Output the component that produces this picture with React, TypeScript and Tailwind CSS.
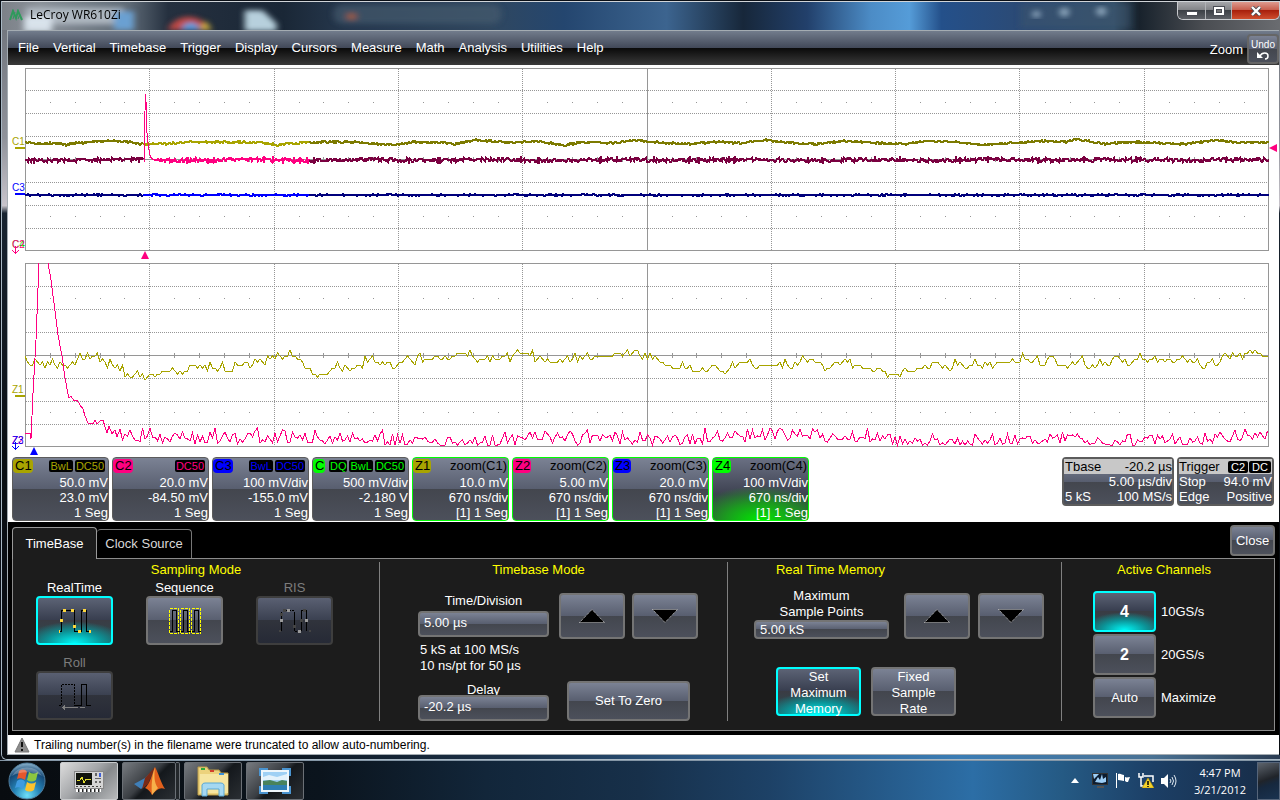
import { useState } from "react";
import type { ReactNode } from "react";

type Point = [number, number];

const MENU = [
  "File",
  "Vertical",
  "Timebase",
  "Trigger",
  "Display",
  "Cursors",
  "Measure",
  "Math",
  "Analysis",
  "Utilities",
  "Help",
];

const PLOT_W = 1244;

// Outlines of the traces, in plot pixels.
const C1_SHAPE: Point[] = [
  [0, 74], [14, 76], [28, 75], [42, 77], [50, 75], [60, 75], [70, 73], [80, 73],
  [105, 74], [112, 76], [140, 76], [160, 74], [215, 74], [240, 75], [252, 77],
  [270, 75], [300, 74], [330, 74], [350, 76], [370, 77], [390, 74], [410, 74],
  [430, 76], [450, 72], [475, 74], [490, 75], [510, 73], [540, 77], [560, 74],
  [590, 75], [610, 72], [640, 75], [665, 76], [690, 74], [715, 75], [740, 72],
  [765, 75], [790, 76], [820, 73], [850, 75], [880, 76], [905, 73], [930, 74],
  [955, 77], [985, 75], [1015, 73], [1040, 74], [1052, 71], [1080, 76], [1110, 74],
  [1135, 75], [1160, 76], [1190, 72], [1215, 75], [1244, 74],
];

const Z1_SHAPE: Point[] = [
  [0, 95], [4, 102], [8, 97], [11, 99], [16, 103], [35, 103], [45, 102], [50, 98],
  [58, 95], [63, 93], [67, 97], [73, 96], [78, 100], [87, 101], [95, 108], [101, 111],
  [106, 115], [111, 111], [116, 113], [121, 115], [125, 112], [132, 109], [140, 110],
  [145, 104], [153, 108], [161, 108], [171, 104], [181, 105], [195, 104], [203, 108],
  [211, 104], [221, 99], [229, 102], [237, 99], [245, 95], [252, 92], [258, 95],
  [263, 90], [268, 91], [273, 95], [278, 102], [285, 108], [293, 113], [300, 108],
  [310, 106], [322, 105], [333, 106], [340, 100], [347, 97], [355, 99], [365, 101],
  [375, 100], [382, 94], [390, 98], [405, 96], [420, 97], [437, 90], [450, 95],
  [465, 97], [485, 95], [495, 90], [520, 98], [535, 99], [555, 94], [575, 93],
  [595, 91], [615, 91], [630, 95], [640, 102], [660, 105], [675, 108], [687, 105],
  [699, 109], [715, 99], [735, 102], [765, 103], [785, 95], [800, 105], [820, 99],
  [835, 103], [845, 106], [860, 110], [872, 112], [880, 109], [888, 107], [897, 105],
  [912, 102], [925, 107], [931, 100], [940, 106], [945, 102], [970, 101], [980, 99],
  [990, 99], [997, 95], [1012, 95], [1018, 103], [1023, 95], [1030, 102], [1045, 104],
  [1055, 99], [1065, 104], [1075, 100], [1085, 104], [1092, 94], [1100, 102],
  [1107, 98], [1120, 95], [1135, 97], [1155, 97], [1171, 96], [1178, 102], [1185, 98],
  [1195, 98], [1203, 92], [1215, 94], [1221, 89], [1231, 89], [1237, 93], [1244, 93],
];

const Z2_RISE = "M0 170H5L6 176L8 130L11 77L14 0";
const Z2_FALL =
  "M23 0L26 17L30 48L33 72L37 93L40 115L43 131L44 135L46 133L49 138L52 137L55 142L58 146L60 153L63 160L68 161L70 157L72 161L76 157H78L80 164L82 170L84 163L87 171L90 167L92 174";

function rng(seed: number) {
  let s = seed;
  return () => {
    s = (s * 1103515245 + 12345) % 2147483648;
    return s / 2147483648;
  };
}

function valueAt(shape: Point[], x: number) {
  for (let i = 1; i < shape.length; i++) {
    const [x0, y0] = shape[i - 1];
    const [x1, y1] = shape[i];
    if (x <= x1) return y0 + ((y1 - y0) * (x - x0)) / (x1 - x0);
  }
  return shape[shape.length - 1][1];
}

function zoomYellow() {
  const rand = rng(17);
  let d = "";
  for (let x = 0; x <= PLOT_W; x += 2.5) {
    const r = rand();
    const jump = r > 0.95 ? -6 : r > 0.72 ? -3 : r < 0.2 ? 3 : 0;
    const y = Math.round((valueAt(Z1_SHAPE, x) + jump) / 3) * 3;
    d += `${d ? "L" : "M"}${x} ${y}`;
  }
  return d;
}

function zoomPink() {
  const rand = rng(91);
  let d = "M92 174";
  for (let x = 95; x <= PLOT_W; x += 2.5) {
    const r = rand();
    const mid = 175 - 2 * Math.sin(x / 38) - 2 * Math.sin(x / 90);
    const spike = r > 0.95 ? -6 : r < 0.05 ? 5 : 0;
    const y = Math.min(182, Math.max(165, mid + (rand() - 0.5) * 13 + spike));
    d += `L${x} ${Math.round(y)}`;
  }
  return d;
}

function noisyLine(from: number, to: number, base: (x: number) => number, amp: number, seed: number) {
  const rand = rng(seed);
  let d = "";
  for (let x = from; x <= to; x++) {
    d += `${d ? "L" : "M"}${x} ${Math.round(base(x) + (rand() - 0.5) * amp)}`;
  }
  return d;
}

const c1Base = (x: number) => valueAt(C1_SHAPE, x);
const c2Base = (x: number) => 92 + 0.5 * Math.sin(x / 20);
const c3Base = () => 127;

const C1_PARTS = [
  { d: noisyLine(0, 118, c1Base, 1.8, 3), color: "#7c7a00" },
  { d: noisyLine(118, 284, c1Base, 1.8, 5), color: "#a8a400" },
  { d: noisyLine(284, PLOT_W, c1Base, 1.8, 7), color: "#7c7a00" },
];
const C2_PARTS = [
  { d: noisyLine(0, 118, c2Base, 4, 13), color: "#7a0040" },
  { d: noisyLine(129, 284, c2Base, 4, 15), color: "#ff0080" },
  { d: noisyLine(284, PLOT_W, c2Base, 4, 19), color: "#7a0040" },
];
const C3_PARTS = [
  { d: noisyLine(0, 118, c3Base, 1.3, 23), color: "#00007c" },
  { d: noisyLine(118, 284, c3Base, 1.3, 25), color: "#0000ff" },
  { d: noisyLine(284, PLOT_W, c3Base, 1.3, 29), color: "#00007c" },
];
const Z1_PATH = zoomYellow();
const Z2_PATH = zoomPink();

const FACE = "bg-[linear-gradient(180deg,#7b8294_0%,#585e6f_50%,#43464e_50%,#4c505b_100%)]";
const FACE_DIM = "bg-[linear-gradient(180deg,#5a6072_0%,#3a4050_50%,#30333c_50%,#262a36_100%)]";
const FACE_ON =
  "bg-[radial-gradient(ellipse_70%_48%_at_50%_100%,#00f6f6_0%,#0c9296_55%,transparent_100%),linear-gradient(180deg,#5c6375_0%,#373d4e_50%,#3a3c44_50%,#2a4c52_100%)]";

function Graticule({ label, mid, children }: { label: string; mid: number; children: ReactNode }) {
  const cols = Array.from({ length: 9 }, (_, i) => Math.round((i + 1) * 124.3) + 0.5);
  const rows = [-3, -2, -1, 1, 2, 3].map((i) => mid + i * 23 + 0.5);
  const minor = Array.from({ length: 50 }, (_, i) => i).filter((i) => i % 5 !== 0);
  return (
    <svg
      role="img"
      aria-label={label}
      viewBox="0 0 1244 184"
      preserveAspectRatio="none"
      shapeRendering="crispEdges"
      fill="none"
      className="block h-[184px] w-full"
    >
      <g stroke="#969696">
        <path d={`M0.5 0.5H1243.5V${mid + 91.5}H0.5z`} />
        {cols.map((x, i) => (
          <path key={x} d={`M${x} 1V183`} strokeDasharray={i === 4 ? undefined : "1 1"} />
        ))}
        {rows.map((y) => (
          <path key={y} d={`M1 ${y}H1243`} strokeDasharray="1 1" />
        ))}
        <path d={`M0 ${mid + 0.5}H1244`} />
        {minor.map((i) => {
          const x = Math.round(i * 24.87);
          return (
            <g key={i}>
              <path d={`M${x + 0.5} ${mid - 2}v5`} />
              <path d={`M${x} ${mid - 56.5}h1M${x} ${mid + 57.5}h1`} />
            </g>
          );
        })}
      </g>
      {children}
    </svg>
  );
}

function TraceMark({ name, color, top }: { name: string; color: string; top: string }) {
  return (
    <div className={`absolute right-0 ${top} ${color} w-[13px] text-[10px] leading-[10px]`}>
      {name}
      <div className="ml-[3px] h-0.5 bg-current" />
    </div>
  );
}

interface OffscreenMarkProps {
  name: string;
  behind: string;
  color: string;
  behindColor: string;
  top: string;
}

// Two traces have left the grid at the same spot, so their names share it.
function OffscreenMark({ name, behind, color, behindColor, top }: OffscreenMarkProps) {
  return (
    <div className={`absolute right-0 ${top} ${color} w-[13px] text-[10px] leading-[10px]`}>
      <span className={`absolute left-0 top-0 ${behindColor}`}>{behind}</span>
      <span className="relative">{name}</span>
      <svg viewBox="0 0 7 9" className="absolute left-0 top-1.5 h-[9px] w-[7px]" shapeRendering="crispEdges" stroke="currentColor" fill="none">
        <path d="M3.5 0V8M0.5 4.5L3.5 7.5L6.5 4.5" />
      </svg>
    </div>
  );
}

interface ChannelProps {
  name: string;
  badge: string;
  short?: string;
  chips?: string[];
  chipColor?: string;
  source?: string;
  lines: string[];
  selected?: boolean;
}

const CHANNELS: ChannelProps[] = [
  { name: "C1", badge: "bg-[#a8a400]", chips: ["BwL", "DC50"], chipColor: "text-[#a8a400]", lines: ["50.0 mV", "23.0 mV", "1 Seg"] },
  { name: "C2", badge: "bg-[#ff0080]", chips: ["DC50"], chipColor: "text-[#ff0080]", lines: ["20.0 mV", "-84.50 mV", "1 Seg"] },
  { name: "C3", badge: "bg-[#0000ff]", chips: ["BwL", "DC50"], chipColor: "text-[#0000ff]", lines: ["100 mV/div", "-155.0 mV", "1 Seg"] },
  { name: "C4", short: "C", badge: "bg-[#00ff00]", chips: ["DQ", "BwL", "DC50"], chipColor: "text-[#00ff00]", lines: ["500 mV/div", "-2.180 V", "1 Seg"] },
  { name: "Z1", badge: "bg-[#a8a400]", source: "zoom(C1)", lines: ["10.0 mV", "670 ns/div", "[1] 1 Seg"] },
  { name: "Z2", badge: "bg-[#ff0080]", source: "zoom(C2)", lines: ["5.00 mV", "670 ns/div", "[1] 1 Seg"] },
  { name: "Z3", badge: "bg-[#0000ff]", source: "zoom(C3)", lines: ["20.0 mV", "670 ns/div", "[1] 1 Seg"] },
  { name: "Z4", badge: "bg-[#00ff00]", source: "zoom(C4)", lines: ["100 mV/div", "670 ns/div", "[1] 1 Seg"], selected: true },
];

function ChannelBox({ name, short, badge, chips, chipColor, source, lines, selected }: ChannelProps) {
  const face = selected
    ? "bg-[radial-gradient(ellipse_75%_55%_at_50%_100%,#00e800_0%,#1c9a20_50%,transparent_100%),linear-gradient(180deg,#6a7083_0%,#3c404f_60%,#34443a_100%)]"
    : FACE;
  return (
    <button
      className={`flex h-16 w-[97px] shrink-0 flex-col rounded-sm border ${source ? "border-[#00ff00]" : "border-[#5c5c5c]"} ${face} text-right leading-[15px] text-white`}
    >
      <span className="flex h-[17px] w-full items-start justify-between text-black">
        <span className={`mt-px h-3.5 shrink-0 rounded-sm pl-0.5 pr-px leading-3.5 ${badge}`}>{short ?? name}</span>
        {source ? (
          <span className="pr-px">{source}</span>
        ) : (
          <span className="mt-0.5 flex shrink-0 gap-0.5 pr-[3px]">
            {chips?.map((chip) => (
              <span key={chip} className={`rounded-xs bg-black px-px text-[11px] leading-3 ${chipColor}`}>
                {chip}
              </span>
            ))}
          </span>
        )}
      </span>
      {lines.map((line) => (
        <span key={line} className="w-full whitespace-nowrap">
          {line}
        </span>
      ))}
    </button>
  );
}

function SquareWave({ dots }: { dots: string }) {
  return (
    <svg viewBox="0 0 34 26" className="h-[26px] w-[34px]" shapeRendering="crispEdges" fill="none">
      <path d="M2 23.5H3.5V2.5H16.5V23.5H23.5V2.5H28.5V23.5H32" stroke="#000" />
      <path
        d="M1 22h1v3h-1zM2 11h3v3H2zM5 1h3v3H5zM13 1h3v3h-3zM15 17h3v3h-3zM20 22h3v3h-3zM25 1h3v3h-3zM31 22h2v3h-2z"
        fill={dots}
      />
    </svg>
  );
}

function SparseWave() {
  return (
    <svg viewBox="0 0 34 26" className="h-[26px] w-[34px]" shapeRendering="crispEdges" fill="none">
      <path d="M3.5 23V4M16.5 4V23M23.5 23V2.5H28.5V23" stroke="#000" />
      <path d="M5 2.5H16M17 23.5H23" stroke="#000" strokeDasharray="2 1" />
      <path d="M1 22h2v2H1zM2 5h3v3H2zM5 1h3v3H5zM15 17h3v3h-3zM22 11h3v3h-3zM25 1h3v3h-3zM31 22h2v2h-2z" fill="#444" />
      <path d="M2 11h3v3H2zM9 1h3v3H9zM20 22h3v3h-3zM27 11h3v3h-3z" fill="#9a9a9a" />
    </svg>
  );
}

function SequenceIcon() {
  return (
    <svg viewBox="0 0 34 28" className="h-7 w-[34px]" shapeRendering="crispEdges" fill="none">
      <path d="M1 24.5H4.5V3.5H8.5V24.5H15.5V3.5H19.5V24.5H26.5V3.5H30.5V24.5H33" stroke="#000" />
      <path d="M1.5 1.5h9v25h-9zM12.5 1.5h9v25h-9zM23.5 1.5h9v25h-9z" stroke="#ffff00" strokeDasharray="3 1" />
    </svg>
  );
}

function RollIcon() {
  return (
    <svg viewBox="0 0 34 28" className="h-7 w-[34px]" shapeRendering="crispEdges" fill="none">
      <path d="M1 23.5H3.5V2.5H16.5V23.5" stroke="#000" strokeDasharray="2 1" />
      <path d="M17 23.5H23.5V2.5H28.5V23.5H33" stroke="#000" />
      <path d="M4 25.5H27" stroke="#808080" strokeDasharray="16 2" />
      <path d="M4 25.5L7 23V28z" fill="#808080" />
    </svg>
  );
}

interface ModeProps {
  label: string;
  icon: ReactNode;
  active?: boolean;
  disabled?: boolean;
  onClick?: () => void;
}

function ModeButton({ label, icon, active, disabled, onClick }: ModeProps) {
  const look = active
    ? `border-[#00ffff] ${FACE_ON}`
    : disabled
      ? `border-[#3e3e3e] ${FACE_DIM}`
      : `border-[#747474] ${FACE}`;
  return (
    <div className="flex flex-col items-center">
      <span className={disabled ? "text-[#7c7c7c]" : ""}>{label}</span>
      <button
        aria-label={label}
        aria-pressed={active}
        disabled={disabled}
        onClick={onClick}
        className={`flex h-[49px] w-full items-center justify-center rounded-[4px] border-2 ${look}`}
      >
        {icon}
      </button>
    </div>
  );
}

function ArrowButton({ down }: { down?: boolean }) {
  return (
    <button
      aria-label={down ? "Decrease" : "Increase"}
      className={`flex h-[46px] w-[66px] items-center justify-center rounded-[4px] border-2 border-[#747474] ${FACE}`}
    >
      <svg viewBox="0 0 26 14" className="h-3.5 w-[26px]">
        <path d={down ? "M0.5 0.5H25.5L13 13.5z" : "M0.5 13.5H25.5L13 0.5z"} fill="#000" stroke="#c8c8c8" strokeDasharray="1 1" />
      </svg>
    </button>
  );
}

function SectionTitle({ children, className }: { children: ReactNode; className?: string }) {
  return <h2 className={`text-center text-[#ffff00] ${className ?? ""}`}>{children}</h2>;
}

function TimebaseDialog() {
  const [mode, setMode] = useState("RealTime");
  const [memory, setMemory] = useState("max");
  const [active, setActive] = useState("4");
  const field = `w-full rounded-[4px] border-2 border-[#747474] px-1 text-white outline-none ${FACE}`;

  return (
    <div className="bg-black px-1 pb-1 leading-4 text-white">
      <div className="flex h-9 items-end">
        <div role="tablist" className="relative z-10 -mb-px flex items-end">
          <button role="tab" aria-selected="true" className="h-8 w-[85px] rounded-t-sm border-x border-t border-[#999] bg-[#1c1c1c]">
            TimeBase
          </button>
          <button role="tab" aria-selected="false" className="mb-px h-[29px] w-[95px] rounded-t-sm border-r border-t border-[#777] bg-black text-[#d8d8d8]">
            Clock Source
          </button>
        </div>
        <button className={`mb-0.5 ml-auto h-[31px] w-[45px] rounded-[4px] border-2 border-[#747474] ${FACE}`}>Close</button>
      </div>
      <div className="grid grid-cols-[366fr_348fr_334fr_213fr] border border-[#8c8c8c] bg-[#1c1c1c] pb-[9px] pt-[3px]">
        <section>
          <SectionTitle className="mb-0.5">Sampling Mode</SectionTitle>
          <div className="grid grid-cols-[repeat(3,77px)] gap-x-[33px] gap-y-2.5 pl-[23px]">
            <ModeButton label="RealTime" active={mode === "RealTime"} onClick={() => setMode("RealTime")} icon={<SquareWave dots="#ffd83c" />} />
            <ModeButton label="Sequence" active={mode === "Sequence"} onClick={() => setMode("Sequence")} icon={<SequenceIcon />} />
            <ModeButton label="RIS" disabled icon={<SparseWave />} />
            <ModeButton label="Roll" disabled icon={<RollIcon />} />
          </div>
        </section>

        <section className="border-l border-[#808080]">
          <SectionTitle className="pr-[30px]">Timebase Mode</SectionTitle>
          <div className="flex gap-2.5 pl-[38px] pt-[15px]">
            <div className="w-[131px]">
              <label htmlFor="time-div" className="mb-0.5 block text-center">
                Time/Division
              </label>
              <input id="time-div" defaultValue="5.00 µs" className={`block h-[26px] pb-1 ${field}`} />
              <p className="mt-[5px] pl-0.5">
                5 kS at 100 MS/s
                <br />
                10 ns/pt for 50 µs
              </p>
              <label htmlFor="delay" className="mt-2 block h-[13px] text-center">
                Delay
              </label>
              <input id="delay" defaultValue="-20.2 µs" className={`relative block h-[26px] pb-1 ${field}`} />
            </div>
            <div className="flex flex-col items-center justify-between">
              <div className="flex gap-[7px]">
                <ArrowButton />
                <ArrowButton down />
              </div>
              <button className={`h-10 w-[123px] rounded-[4px] border-2 border-[#747474] ${FACE}`}>Set To Zero</button>
            </div>
          </div>
        </section>

        <section className="border-l border-[#808080] pl-[26px]">
          <SectionTitle className="w-[153px]">Real Time Memory</SectionTitle>
          <div className="flex items-end gap-[15px] pt-2.5">
            <div className="w-[135px]">
              <label htmlFor="max-points" className="block text-center">
                Maximum
                <br />
                Sample Points
              </label>
              <input id="max-points" defaultValue="5.00 kS" className={`block h-[19px] ${field}`} />
            </div>
            <div className="flex gap-2">
              <ArrowButton />
              <ArrowButton down />
            </div>
          </div>
          <div className="mt-7 flex gap-2.5 pl-[22px]">
            <button
              aria-pressed={memory === "max"}
              onClick={() => setMemory("max")}
              className={`h-[49px] w-[85px] rounded-[4px] border-2 px-3 ${memory === "max" ? `border-[#00ffff] ${FACE_ON}` : `border-[#747474] ${FACE}`}`}
            >
              Set Maximum Memory
            </button>
            <button
              aria-pressed={memory === "fixed"}
              onClick={() => setMemory("fixed")}
              className={`h-[49px] w-[85px] rounded-[4px] border-2 px-3 ${memory === "fixed" ? `border-[#00ffff] ${FACE_ON}` : `border-[#747474] ${FACE}`}`}
            >
              Fixed Sample Rate
            </button>
          </div>
        </section>

        <section className="border-l border-[#808080]">
          <SectionTitle className="pr-2">Active Channels</SectionTitle>
          <div className="flex flex-col gap-0.5 pl-[31px] pt-[13px]">
            {[
              ["4", "10GS/s"],
              ["2", "20GS/s"],
              ["Auto", "Maximize"],
            ].map(([value, text]) => (
              <div key={value} className="flex items-center gap-[5px]">
                <button
                  aria-pressed={active === value}
                  onClick={() => setActive(value)}
                  className={`h-[41px] w-[63px] rounded-[4px] border-2 ${value === "Auto" ? "" : "text-base font-bold"} ${active === value ? `border-[#00ffff] ${FACE_ON}` : `border-[#747474] ${FACE}`}`}
                >
                  {value}
                </button>
                <span>{text}</span>
              </div>
            ))}
          </div>
        </section>
      </div>
    </div>
  );
}

// Desktop seen through the glass title bar.
function Glass() {
  return (
    <svg aria-hidden="true" viewBox="0 0 1280 30" preserveAspectRatio="none" className="absolute inset-0 h-full w-full">
      <defs>
        <linearGradient id="glass">
          <stop offset="0" stopColor="#7c8188" />
          <stop offset="0.03" stopColor="#8b929a" />
          <stop offset="0.1" stopColor="#5d6975" />
          <stop offset="0.13" stopColor="#25303f" />
          <stop offset="0.22" stopColor="#1a2736" />
          <stop offset="0.27" stopColor="#26384e" />
          <stop offset="0.38" stopColor="#30475f" />
          <stop offset="0.44" stopColor="#24466f" />
          <stop offset="0.52" stopColor="#3c648f" />
          <stop offset="0.58" stopColor="#17273a" />
          <stop offset="0.63" stopColor="#22406b" />
          <stop offset="0.68" stopColor="#4c8cc6" />
          <stop offset="0.71" stopColor="#559cd8" />
          <stop offset="0.735" stopColor="#24508a" />
          <stop offset="0.8" stopColor="#2c4a74" />
          <stop offset="0.87" stopColor="#34506a" />
          <stop offset="0.89" stopColor="#18222c" />
          <stop offset="0.94" stopColor="#4a4d52" />
          <stop offset="1" stopColor="#6a6c70" />
        </linearGradient>
        <filter id="soft">
          <feGaussianBlur stdDeviation="3" />
        </filter>
      </defs>
      <rect width="1280" height="30" fill="url(#glass)" />
      <g filter="url(#soft)">
        <rect x="24" y="6" width="98" height="18" fill="#b4bcc5" opacity="0.9" />
        <rect x="22" y="16" width="28" height="16" fill="#dfe9f2" opacity="0.9" />
        <rect x="112" y="10" width="20" height="20" fill="#6ba0d2" />
        <path d="M166 30a22 20 0 0 1 42 0z" fill="#c04a45" />
        <path d="M180 30a9 8 0 0 1 18 0z" fill="#5b9de0" />
        <path d="M198 30l6-10 6 10z" fill="#d6b63d" />
        <path d="M243 9h18l14 14v8h-32z" fill="#b7d0dd" />
        <rect x="332" y="3" width="168" height="20" rx="8" fill="#4a5d72" opacity="0.6" />
        <rect x="345" y="12" width="10" height="7" fill="#9a5a45" />
        <rect x="1020" y="2" width="110" height="26" fill="#3d566e" opacity="0.5" />
      </g>
      <g fill="#9fb8cc" filter="url(#soft)" opacity="0.8">
        <circle cx="1036" cy="13" r="4" />
        <circle cx="1064" cy="11" r="5" />
        <circle cx="1101" cy="10" r="5" />
      </g>
    </svg>
  );
}

function TitleBar() {
  return (
    <header className="relative flex h-[29px] items-start border-t border-[#d0d4d8] text-black">
      <Glass />
      <h1 className="relative flex items-center gap-1.5 pl-[7px] pt-[5px] font-['Open_Sans',sans-serif] text-[12px] leading-4">
        <svg viewBox="0 0 15 12" className="h-3 w-[15px]" fill="none" stroke="#2f9a5c" strokeWidth="2">
          <path d="M1 11L4 2L7 9L9 2L13 11" />
          <path d="M4 10L6 3M9 10L11 5" strokeWidth="1" />
        </svg>
        LeCroy WR610Zi
      </h1>
      <div className="relative ml-auto flex h-[18px] overflow-hidden rounded-b-md border border-t-0 border-[#c8cace]">
        <button aria-label="Minimize" className="flex w-[28px] items-center justify-center border-r border-[#b0b2b6] bg-[linear-gradient(180deg,#a5a6aa_0%,#838589_45%,#3c4046_50%,#5d6066_100%)]">
          <svg viewBox="0 0 12 5" className="mt-1.5 h-[5px] w-3">
            <rect x="0.5" y="0.5" width="11" height="4" fill="#fff" stroke="#4a4d55" />
          </svg>
        </button>
        <button aria-label="Maximize" className="flex w-[26px] items-center justify-center border-r border-[#b0b2b6] bg-[linear-gradient(180deg,#a5a6aa_0%,#838589_45%,#3c4046_50%,#5d6066_100%)]">
          <svg viewBox="0 0 12 10" className="h-2.5 w-3" fill="none">
            <rect x="0.5" y="0.5" width="11" height="9" fill="#fff" stroke="#4a4d55" />
            <rect x="3.5" y="3.5" width="5" height="3" fill="#777" stroke="#4a4d55" />
          </svg>
        </button>
        <button aria-label="Close window" className="flex w-[47px] items-center justify-center bg-[linear-gradient(180deg,#dd9b8f_0%,#c8604f_45%,#a8200c_50%,#cf4e2e_100%)]">
          <svg viewBox="0 0 12 10" className="h-2.5 w-3">
            <path d="M2 1L10 9M10 1L2 9" stroke="#4a4d55" strokeWidth="4" />
            <path d="M2 1L10 9M10 1L2 9" stroke="#fff" strokeWidth="2.4" />
          </svg>
        </button>
      </div>
    </header>
  );
}

function Taskbar() {
  const tile =
    "flex h-[38px] items-center justify-center rounded-xs border border-[#6b7076] bg-[linear-gradient(135deg,#777b80_0%,#3a3e43_45%,#14181c_55%,#2a2e33_100%)]";
  return (
    <footer className="flex h-10 items-center border-t border-[#8496a6] bg-[linear-gradient(90deg,#080c10_0%,#0b141d_25%,#12263a_38%,#17304a_50%,#1d4166_60%,#2c6ea6_76%,#255a84_83%,#1c3f66_90%,#172b45_100%)] font-['Open_Sans',sans-serif] text-[11px] text-white">
      <button aria-label="Start" className="ml-2 mr-[14px]">
        <svg viewBox="0 0 38 38" className="h-[38px] w-[38px]">
          <defs>
            <radialGradient id="orb" cx="0.5" cy="0.9" r="0.9">
              <stop offset="0" stopColor="#6fe0f8" />
              <stop offset="0.4" stopColor="#2585b8" />
              <stop offset="0.75" stopColor="#164a78" />
              <stop offset="1" stopColor="#8fb6cf" />
            </radialGradient>
          </defs>
          <circle cx="19" cy="19" r="18" fill="url(#orb)" stroke="#4f7c9c" />
          <path d="M11 9c3-2 6-2 8 1l-2 8c-3-2-6-2-8-1z" fill="#e4572c" />
          <path d="M21 10c3 2 6 2 9 0l-2 8c-3 2-6 2-9 0z" fill="#8cc63f" />
          <path d="M9 19c3-2 6-2 8 1l-2 7c-3-2-6-2-8-1z" fill="#3f9be0" />
          <path d="M19 20c3 2 6 2 9 0l-2 8c-3 2-6 2-9 0z" fill="#fcc32c" />
          <path d="M4 14a16 13 0 0 1 30 0c-8-5-22-5-30 0z" fill="#fff" opacity="0.25" />
        </svg>
      </button>
      <nav aria-label="Running programs" className="flex gap-1">
        <button aria-label="LeCroy" className="flex h-[38px] w-[58px] items-center justify-center rounded-xs border border-[#c8cacc] bg-[linear-gradient(135deg,#dcdcdc_0%,#a3a5a8_45%,#85888b_60%,#b8babc_100%)]">
          <svg viewBox="0 0 32 24" className="h-6 w-8" shapeRendering="crispEdges">
            <rect x="1" y="2" width="29" height="17" fill="#d5d5d5" stroke="#888" />
            <rect x="3" y="4" width="16" height="12" fill="#10130c" />
            <path d="M4 11h3l2-3 2 6 2-4h5" stroke="#e2dc30" fill="none" />
            <path d="M22 4h2v3h-2zM22 9h6v1h-6zM22 12h2v2h-2zM26 12h2v2h-2z" fill="#666" />
            <rect x="26" y="4" width="2" height="4" fill="#4060d8" />
            <path d="M3 17.5h25" stroke="#444" strokeDasharray="2 2" />
            <path d="M3 21h25" stroke="#fff" strokeWidth="3" strokeDasharray="2 2" />
            <path d="M5 21h24" stroke="#222" strokeWidth="3" strokeDasharray="1 3" />
          </svg>
        </button>
        <div className="flex">
          <button aria-label="MATLAB" className={`w-[54px] ${tile}`}>
            <svg viewBox="0 0 32 30" className="h-[30px] w-8">
              <path d="M1 18L12 12L17 7L13 19L8 23z" fill="#3f7fb8" />
              <path d="M12 12L22 1L15 18L9 23z" fill="#7a2a16" />
              <path d="M22 1C25 6 28 17 32 23C27 21 24 23 19 29C17 25 15 23 12 22C17 18 19 8 22 1z" fill="#e2601c" />
              <path d="M22 1C21 9 21 17 25 22C23 24 21 26 19 29C18 20 19 9 22 1z" fill="#f7b04a" />
            </svg>
          </button>
          <div className="h-[38px] w-1 rounded-r-xs border-y border-r border-[#6b7076] bg-[#23272b]" />
        </div>
        <button aria-label="Explorer" className={`w-[58px] ${tile}`}>
          <svg viewBox="0 0 34 32" className="h-8 w-[34px]">
            <path d="M2 2h9l2 3h10l2 3h7v22H2z" fill="#ecd27c" stroke="#b89a48" />
            <path d="M4 9h28v19H4z" fill="#f6e5a0" />
            <path d="M5 3h4v2H5z" fill="#2fa83a" />
            <path d="M14 5h4v2h-4z" fill="#d2402c" />
            <path d="M23 8h5v2h-5z" fill="#3a8fd8" />
            <path d="M6 31V20a3 3 0 0 1 3-2h16a3 3 0 0 1 3 2v11h-5v-7H11v7z" fill="#a5d8f2" stroke="#5ba8d4" />
          </svg>
        </button>
        <button aria-label="Viewer" className={`w-[58px] ${tile}`}>
          <svg viewBox="0 0 32 26" className="h-[26px] w-8">
            <path d="M1 8V1h8M23 1h8v7M31 18v7h-8M9 25H1v-7" fill="#4a94d0" stroke="#4a94d0" strokeWidth="2" />
            <rect x="3" y="3" width="26" height="20" fill="#9fd0f4" stroke="#eef6fb" strokeWidth="2" />
            <path d="M4 9l6-2 8 2 10-3v6H4z" fill="#e4f2fb" />
            <path d="M4 13l7-1 7 2 5-2 5 1v4H4z" fill="#49835c" />
            <path d="M4 17h24v5H4z" fill="#2f7fb4" />
          </svg>
        </button>
      </nav>
      <div className="ml-auto flex items-center gap-[7px]">
        <svg viewBox="0 0 8 5" className="mr-1.5 h-[5px] w-2" fill="#fff">
          <path d="M0 5L4 0L8 5z" />
        </svg>
        <svg viewBox="0 0 16 15" className="h-[15px] w-4">
          <rect x="0.5" y="0.5" width="15" height="11" fill="#0c1c30" stroke="#333" />
          <path d="M1 1h6l-5 5zM3 9l3-5 2 3 2-6 1 5 3-2v5l-4 1z" fill="#9ccdf5" />
          <path d="M5 13h7v2H5z" fill="#555" />
        </svg>
        <svg viewBox="0 0 16 15" className="h-[15px] w-4" fill="#fff">
          <path d="M1 0h1v15H1z" />
          <path d="M3 1c3-1 4 1 6 1v6c-2 0-3-1-6-1zM10 4c2 1 3 0 5 0l-2 5c-1 0-2 0-3-1z" />
        </svg>
        <svg viewBox="0 0 16 15" className="h-[15px] w-4" fill="none">
          <path d="M1 0v4h4V0M3 4v9h3M6 3h9v6" stroke="#fff" strokeWidth="1.5" />
          <path d="M10 5L16 15H4z" fill="#f5d32c" stroke="#b89000" strokeWidth="0.6" />
          <path d="M10 8v4M10 13v1" stroke="#000" strokeWidth="1.5" />
        </svg>
        <svg viewBox="0 0 16 14" className="h-3.5 w-4" fill="none">
          <path d="M0 4h3l4-4v14l-4-4H0z" fill="#fff" />
          <path d="M9 5q2 2 0 4M11 3q3 4 0 8M13 1q4 6 0 12" stroke="#dfe8f0" />
        </svg>
        <div className="ml-1 w-16 text-center leading-[17px]">
          4:47 PM
          <br />
          3/21/2012
        </div>
        <button aria-label="Show desktop" className="-ml-0.5 h-[38px] w-[23px] border border-[#56657a] bg-[linear-gradient(160deg,#5d646d_0%,#20242a_45%,#16283e_60%,#1a3350_100%)]" />
      </div>
    </footer>
  );
}

export default function App() {
  return (
    <div className="bg-[#0a0f16] pt-px font-['Liberation_Sans',Arial,sans-serif] text-[13px]">
      <main className="ml-px overflow-hidden rounded-bl-md border-b border-l border-[#a9b8c4] bg-[linear-gradient(180deg,#6b7078_0%,#8f929a_18%,#c8c4cb_27%,#18232f_28%,#0a0e13_60%)]">
        <TitleBar />
        <div className="ml-[5px] mr-px border-y border-l border-[#a4acb2]">
          <nav aria-label="Main menu" className="flex h-[34px] items-center bg-[linear-gradient(180deg,#727c8c_0%,#414858_50%,#0a0a0a_50%,#3a3a3a_100%)] pl-[10px] text-white">
            <div className="flex gap-3.5">
              {MENU.map((item) => (
                <button key={item}>{item}</button>
              ))}
            </div>
            <span className="ml-auto pt-1">Zoom</span>
            <button className={`ml-1 mt-0.5 flex h-[30px] w-8 flex-col items-center justify-center rounded-[4px] border-2 border-[#666] text-[10px] leading-3 ${FACE}`}>
              Undo
              <svg viewBox="0 0 12 9" className="h-[9px] w-3" fill="none" stroke="#fff" strokeWidth="1.5">
                <path d="M3 5C5 1 11 1 11 5C11 7 10 8 8 8" />
                <path d="M0 1V7H6z" fill="#fff" stroke="none" />
              </svg>
            </button>
          </nav>

          <div className="bg-white pb-px pt-[3px]">
            <div className="relative flex h-[195px]">
              <div className="relative w-[17px] shrink-0">
                <TraceMark name="C1" color="text-[#a8a400]" top="top-[69px]" />
                <TraceMark name="C3" color="text-[#0000ff]" top="top-[115px]" />
                <OffscreenMark name="C2" behind="C4" color="text-[#ff0080]" behindColor="text-[#00e000]" top="top-[172px]" />
              </div>
              <div className="relative min-w-0 flex-1">
                <Graticule label="Acquired traces" mid={91}>
                  <g strokeWidth="2">
                    {[...C1_PARTS, ...C3_PARTS, ...C2_PARTS].map((part) => (
                      <path key={part.d} d={part.d} stroke={part.color} />
                    ))}
                  </g>
                  <path d="M119.5 94V60L120.5 26L121.5 42V60L123.5 80L125.5 89L128.5 92" stroke="#ff0080" />
                </Graticule>
                <svg viewBox="0 0 8 8" className="absolute left-[9.3%] top-[183px] h-2 w-2" fill="#ff0080">
                  <path d="M0 8L4 0L8 8z" />
                </svg>
              </div>
              <div className="w-2.5 shrink-0 pt-[76px]">
                <svg viewBox="0 0 8 8" className="h-2 w-2" fill="#ff0080">
                  <path d="M8 0L0 4L8 8z" />
                </svg>
              </div>
            </div>

            <div className="flex h-[194px]">
              <div className="relative w-[17px] shrink-0">
                <TraceMark name="Z1" color="text-[#a8a400]" top="top-[122px]" />
                <OffscreenMark name="Z3" behind="Z2" color="text-[#0000ff]" behindColor="text-[#ff0080]" top="top-[173px]" />
              </div>
              <div className="relative mr-2.5 min-w-0 flex-1">
                <Graticule label="Zoomed traces" mid={92}>
                  <path d={Z1_PATH} stroke="#a8a400" />
                  <path d={Z2_RISE + Z2_FALL} stroke="#ff0080" />
                  <path d={Z2_PATH} stroke="#ff0080" />
                </Graticule>
                <svg viewBox="0 0 8 8" className="absolute left-[5px] top-[184px] h-2 w-2" fill="#0000ff">
                  <path d="M0 8L4 0L8 8z" />
                </svg>
              </div>
            </div>

            <div className="flex items-start gap-[3px] pl-1 pr-[5px]">
              {CHANNELS.map((channel) => (
                <ChannelBox key={channel.name} {...channel} />
              ))}
              <button className={`ml-auto w-28 rounded-sm border-2 border-[#5c5c5c] leading-[15px] text-white ${FACE}`}>
                <span className="flex justify-between bg-[#c8c8c8] pl-px text-black">
                  <span>Tbase</span>
                  <span>-20.2 µs</span>
                </span>
                <span className="block text-right">5.00 µs/div</span>
                <span className="flex justify-between pl-px">
                  <span>5 kS</span>
                  <span>100 MS/s</span>
                </span>
              </button>
              <button className={`w-[97px] rounded-sm border-2 border-[#5c5c5c] leading-[15px] text-white ${FACE}`}>
                <span className="flex justify-between bg-[#c8c8c8] text-black">
                  <span>Trigger</span>
                  <span className="flex items-center gap-px pr-px text-[11px] leading-3 text-white">
                    <span className="rounded-xs bg-black px-[3px]">C2</span>
                    <span className="rounded-xs bg-black px-[3px]">DC</span>
                  </span>
                </span>
                <span className="flex justify-between">
                  <span>Stop</span>
                  <span>94.0 mV</span>
                </span>
                <span className="flex justify-between">
                  <span>Edge</span>
                  <span>Positive</span>
                </span>
              </button>
            </div>
          </div>

          <TimebaseDialog />

          <p role="status" className="flex h-[19px] items-center gap-1 bg-white pl-1.5 text-[12px] text-black">
            <svg viewBox="0 0 16 16" className="h-4 w-4">
              <path d="M8 1L15 15H1z" fill="#8c8c8c" stroke="#777" strokeLinejoin="round" />
              <path d="M8 5v5M8 12v2" stroke="#111" strokeWidth="2" />
            </svg>
            Trailing number(s) in the filename were truncated to allow auto-numbering.
          </p>
        </div>
        <div className="h-1 bg-[linear-gradient(90deg,#080c10_0%,#0b141d_20%,#1c3148_40%,#2c5884_55%,#3a7cb4_75%,#4a7294_90%,#2a3c52_100%)]" />
      </main>
      <Taskbar />
    </div>
  );
}
